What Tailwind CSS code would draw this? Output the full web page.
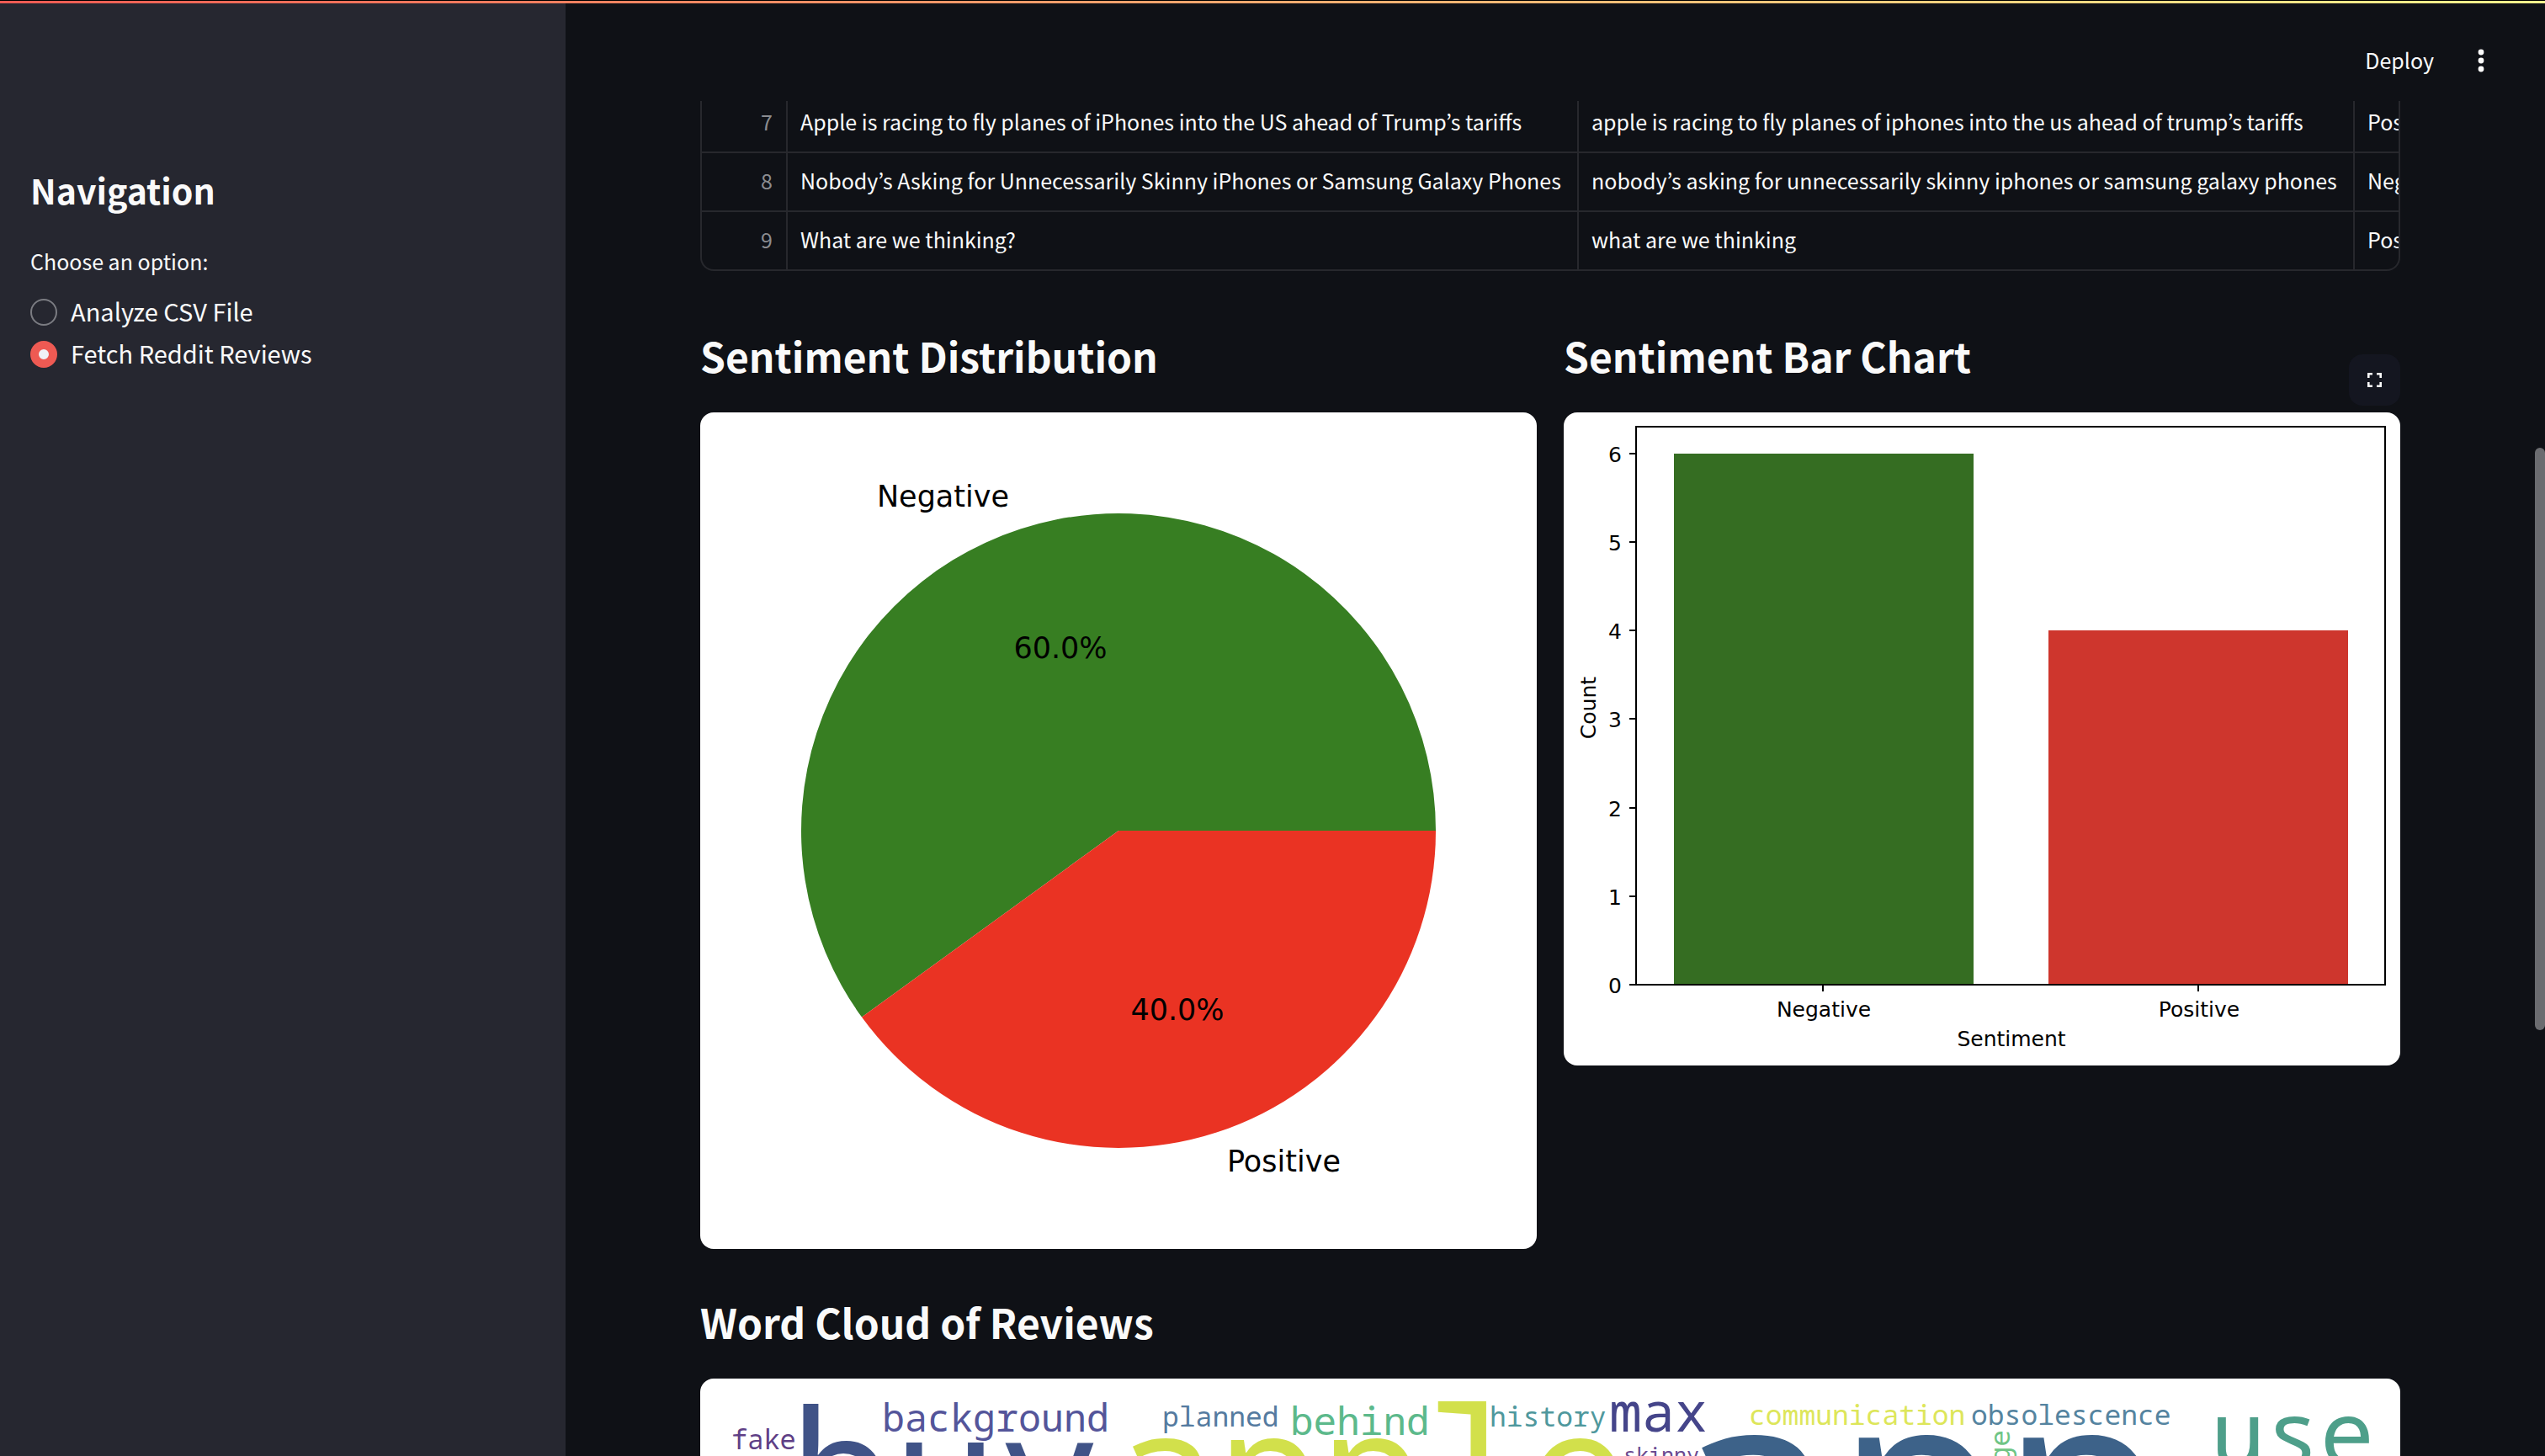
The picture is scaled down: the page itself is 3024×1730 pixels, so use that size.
<!DOCTYPE html>
<html lang="en">
<head>
<meta charset="utf-8">
<meta name="viewport" content="width=device-width, initial-scale=1">
<title>Sentiment Analysis</title>
<script src="https://cdn.jsdelivr.net/npm/@tailwindcss/browser@4"></script>
</head>
<body class="relative flex h-screen flex-col overflow-hidden bg-[#0f1116] font-['Noto_Sans_CJK_KR','Open_Sans',sans-serif] text-[#fafafa]">
  <div class="h-1 w-full shrink-0 border-t border-black bg-linear-to-r from-[#ee5a53] to-[#fbf38c]"></div>

  <div class="flex min-h-0 flex-1">
    <!-- Sidebar -->
    <aside class="w-[672px] shrink-0 bg-[#262730] px-9 pt-48">
      <h2 class="text-[41px] leading-[58px] font-bold">Navigation</h2>
      <fieldset class="mt-9">
        <legend class="text-[25px] leading-10">Choose an option:</legend>
        <div class="mt-4 flex flex-col">
          <label class="flex h-[50px] items-center gap-4 text-[29px] leading-[46px]">
            <input type="radio" name="mode" class="size-8 appearance-none rounded-full border-2 border-[#7b7c82] checked:border-[10px] checked:border-[#ee5a53] checked:bg-[#f0f2f6]">
            <span class="pb-1">Analyze CSV File</span>
          </label>
          <label class="flex h-[50px] items-center gap-4 text-[29px] leading-[46px]">
            <input type="radio" name="mode" checked class="size-8 appearance-none rounded-full border-2 border-[#7b7c82] checked:border-[10px] checked:border-[#ee5a53] checked:bg-[#f0f2f6]">
            <span class="pb-1">Fetch Reddit Reviews</span>
          </label>
        </div>
      </fieldset>
    </aside>

    <!-- Main area -->
    <div class="flex min-w-0 flex-1 flex-col">
      <header class="flex h-[116px] shrink-0 items-center justify-end gap-9 pt-5 pr-[56px]">
        <button type="button" class="pb-0.5 text-[25px] leading-10">Deploy</button>
        <button type="button" aria-label="Main menu" class="flex size-10 items-center justify-center">
          <svg class="size-10" viewBox="0 0 40 40" fill="currentColor"><circle cx="20" cy="10" r="3.4"/><circle cx="20" cy="20" r="3.4"/><circle cx="20" cy="30" r="3.4"/></svg>
        </button>
      </header>

      <main class="min-h-0 flex-1 overflow-hidden pr-[172px] pl-40">
        <div class="-mt-2 overflow-hidden rounded-b-2xl border-2 border-t-0 border-[#27282d]">
          <table class="w-[2200px] table-fixed border-separate border-spacing-0 text-[25px] leading-[64px] whitespace-nowrap">
            <colgroup><col class="w-[102px]"><col class="w-[940px]"><col class="w-[922px]"><col></colgroup>
            <tbody>
              <tr class="h-[70px]">
                <th scope="row" class="border-r-2 border-b-2 border-[#27282d] pr-4 pb-1 text-right font-normal text-[#8b8c90]">7</th>
                <td class="border-r-2 border-b-2 border-[#27282d] pb-1 pl-[15px]">Apple is racing to fly planes of iPhones into the US ahead of Trump’s tariffs</td>
                <td class="border-r-2 border-b-2 border-[#27282d] pb-1 pl-[15px]">apple is racing to fly planes of iphones into the us ahead of trump’s tariffs</td>
                <td class="border-b-2 border-[#27282d] pb-1 pl-[15px]">Positive</td>
              </tr>
              <tr class="h-[70px]">
                <th scope="row" class="border-r-2 border-b-2 border-[#27282d] pr-4 pb-1 text-right font-normal text-[#8b8c90]">8</th>
                <td class="border-r-2 border-b-2 border-[#27282d] pb-1 pl-[15px]">Nobody’s Asking for Unnecessarily Skinny iPhones or Samsung Galaxy Phones</td>
                <td class="border-r-2 border-b-2 border-[#27282d] pb-1 pl-[15px]">nobody’s asking for unnecessarily skinny iphones or samsung galaxy phones</td>
                <td class="border-b-2 border-[#27282d] pb-1 pl-[15px]">Negative</td>
              </tr>
              <tr class="h-[68px]">
                <th scope="row" class="border-r-2 border-[#27282d] pr-4 pb-1 text-right font-normal text-[#8b8c90]">9</th>
                <td class="border-r-2 border-[#27282d] pb-1 pl-[15px]">What are we thinking?</td>
                <td class="border-r-2 border-[#27282d] pb-1 pl-[15px]">what are we thinking</td>
                <td class="pb-1 pl-[15px]">Positive</td>
              </tr>
            </tbody>
          </table>
        </div>

        <div class="mt-16 grid grid-cols-2 items-start gap-8">
          <section>
            <h3 class="pb-8 text-[48px] leading-[72px] font-bold">Sentiment Distribution</h3>
            <svg class="block h-auto w-full rounded-2xl bg-white font-['DejaVu_Sans',sans-serif]" viewBox="0 0 994 994" font-size="35" role="img" aria-label="Sentiment pie chart">
              <path d="M497 497H874A377 377 0 1 0 192 718.600Z" fill="#377e22"/>
              <path d="M497 497H874A377 377 0 0 1 192 718.600Z" fill="#ea3323"/>
              <text x="367" y="112" text-anchor="end">Negative</text>
              <text x="428" y="292" text-anchor="middle">60.0%</text>
              <text x="567" y="722" text-anchor="middle">40.0%</text>
              <text x="626" y="902">Positive</text>
            </svg>
          </section>
          <section class="relative">
            <h3 class="pb-8 text-[48px] leading-[72px] font-bold">Sentiment Bar Chart</h3>
            <button type="button" aria-label="View fullscreen" class="absolute top-[35px] right-0 flex size-[61px] items-center justify-center rounded-2xl bg-[#141620]">
              <svg class="size-[17px]" viewBox="0 0 17 17" fill="none" stroke="#fafafa" stroke-width="2.600"><path d="M1.300 6V1.300H6M11 1.300H15.700V6M15.700 11V15.700H11M6 15.700H1.300V11"/></svg>
            </button>
            <svg class="block h-auto w-full rounded-2xl bg-white font-['DejaVu_Sans',sans-serif]" viewBox="0 0 994 776" font-size="25" role="img" aria-label="Sentiment bar chart">
              <path d="M131 49H487V680H131Z" fill="#356d22"/>
              <path d="M576 259H932V680H576Z" fill="#ce362d"/>
              <path d="M86 17H976V680H86ZM78 49H86M78 154H86M78 259H86M78 364H86M78 470H86M78 575H86M78 680H86M308 680V688M754 680V688" fill="none" stroke="#000" stroke-width="2"/>
              <g text-anchor="end">
                <text x="69" y="59">6</text><text x="69" y="164">5</text><text x="69" y="269">4</text><text x="69" y="374">3</text><text x="69" y="480">2</text><text x="69" y="585">1</text><text x="69" y="690">0</text>
              </g>
              <g text-anchor="middle">
                <text x="309" y="718">Negative</text>
                <text x="755" y="718">Positive</text>
                <text x="532" y="753">Sentiment</text>
                <text transform="translate(38 351) rotate(-90)">Count</text>
              </g>
            </svg>
          </section>
        </div>

        <section class="mt-[50px]">
          <h3 class="pb-8 text-[48px] leading-[72px] font-bold">Word Cloud of Reviews</h3>
          <svg class="block h-auto w-full rounded-2xl bg-white font-['Droid_Sans_Mono','Noto_Sans_Mono','DejaVu_Sans_Mono',monospace]" viewBox="0 0 2020 1040" role="img" aria-label="Word cloud">
            <text x="37" y="84" font-size="32" fill="#5f3f86">fake</text>
            <text x="106" y="187" font-size="206" fill="#405387">buy</text>
            <text x="216" y="63" font-size="45" fill="#54559a">background</text>
            <text x="549" y="57" font-size="33" fill="#557ba0">planned</text>
            <text x="701" y="67" font-size="46" fill="#5cb98b">behind</text>
            <text x="492" y="183" font-size="204" fill="#d2e04b">apple</text>
            <text x="938" y="57" font-size="33" fill="#4f989d">history</text>
            <text x="1080" y="63" font-size="65" fill="#45458a">max</text>
            <text x="1097" y="100" font-size="25" fill="#6a4a90">skinny</text>
            <text x="1246" y="55" font-size="33" fill="#dde65a">communication</text>
            <text x="1510" y="55" font-size="33" fill="#5584a0">obsolescence</text>
            <text x="1155" y="245" font-size="326" fill="#3d6289">app</text>
            <text transform="translate(1556 61) rotate(-90)" text-anchor="end" font-size="33" fill="#6fc585">ge</text>
            <text x="1795" y="104" font-size="108" fill="#4e9f8a">use</text>
          </svg>
        </section>
      </main>
    </div>
  </div>

  <div class="absolute top-[532px] right-0 h-[692px] w-3 rounded-full bg-[#6b6c70]"></div>
</body>
</html>
